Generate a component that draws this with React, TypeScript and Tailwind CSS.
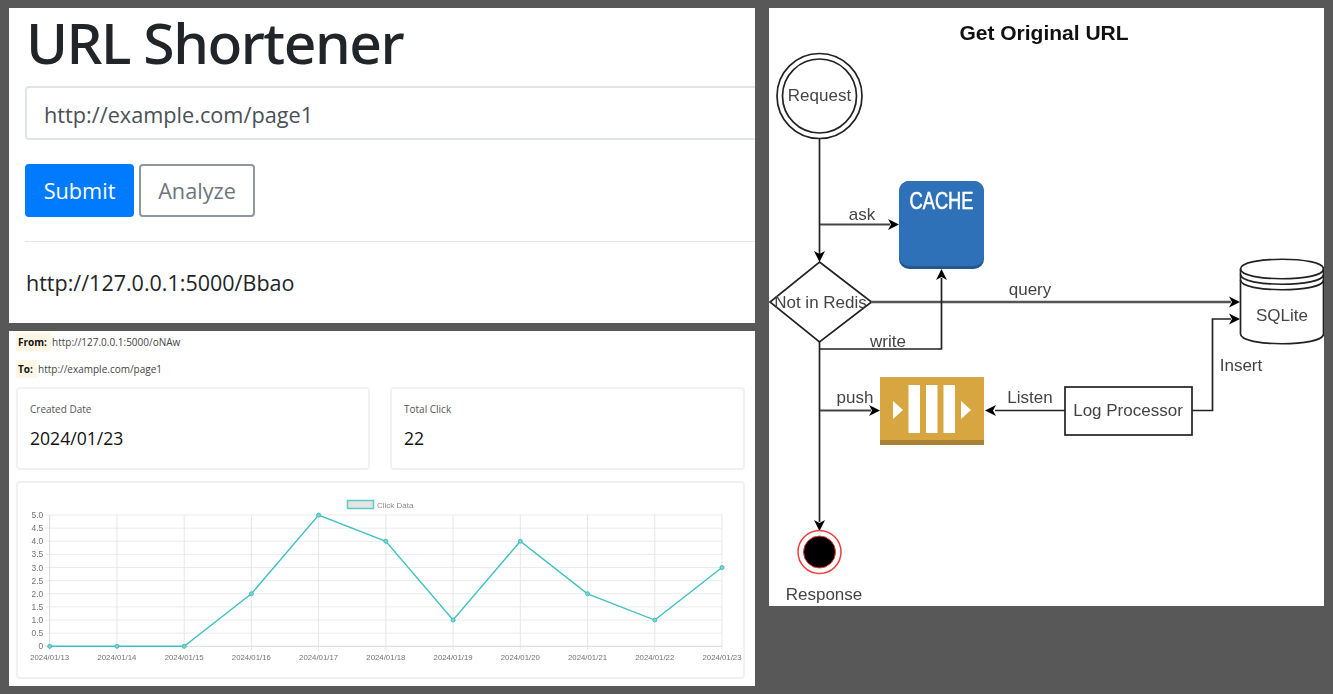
import React from 'react';

const clicks = [0, 0, 0, 2, 5, 4, 1, 4, 2, 1, 3];
const dates = ['13', '14', '15', '16', '17', '18', '19', '20', '21', '22', '23'];
const yLabels = ['0', '0.5', '1.0', '1.5', '2.0', '2.5', '3.0', '3.5', '4.0', '4.5', '5.0'];

const Chart: React.FC = () => {
  const left = 32.7;
  const stepX = 67.23;
  const bottom = 164.3;
  const stepY = 26.26;
  const px = (i: number) => left + i * stepX;
  const py = (v: number) => bottom - v * stepY;
  const points = clicks.map((v, i) => `${px(i)},${py(v)}`).join(' ');

  return (
    <svg viewBox="1 1 725 194" className="block h-[194px] w-[725px] blur-[0.3px] font-['Liberation_Sans',sans-serif]">
      <rect x="330.5" y="18.5" width="26" height="8" fill="#e4e4e4" stroke="#5fc9c9" strokeWidth="1.5" />
      <text x="360" y="25.5" fontSize="8" fill="#8a8a8a">Click Data</text>
      {yLabels.map((label, i) => (
        <g key={label}>
          <line x1={left - 4} x2={px(10)} y1={py(i / 2)} y2={py(i / 2)} stroke={i === 0 ? '#d8d8d8' : '#ebebeb'} />
          <text x={left - 6.5} y={py(i / 2) + 3} fontSize="8.4" fill="#737373" textAnchor="end">{label}</text>
        </g>
      ))}
      {dates.map((day, i) => (
        <g key={day}>
          <line x1={px(i)} x2={px(i)} y1={py(5)} y2={bottom + 4} stroke={i === 0 ? '#d8d8d8' : '#e6e6e6'} />
          <text x={px(i)} y={bottom + 14} fontSize="7.8" fill="#737373" textAnchor="middle">2024/01/{day}</text>
        </g>
      ))}
      <polyline points={points} fill="none" stroke="#3fc1c1" strokeWidth="1.4" />
      {clicks.map((v, i) => (
        <circle key={i} cx={px(i)} cy={py(v)} r="2" fill="#7cd0d0" stroke="#3fc1c1" strokeWidth="1" />
      ))}
    </svg>
  );
};

const Arrow: React.FC<{ x: number; y: number; dir: 'right' | 'left' | 'up' | 'down' }> = ({ x, y, dir }) => {
  const angle = { right: 0, down: 90, left: 180, up: 270 }[dir];
  return <path d="M0 0 L-11 -5.5 L-8 0 L-11 5.5 Z" fill="#000" transform={`translate(${x} ${y}) rotate(${angle})`} />;
};

const Diagram: React.FC = () => (
  <svg viewBox="769 8 555 598" className="block h-[598px] w-[555px] blur-[0.35px] font-['Liberation_Sans',sans-serif]">
    <text x="1044" y="40" fontSize="21" fontWeight="700" fill="#111" textAnchor="middle">Get Original URL</text>

    <g fill="none" stroke="#222" strokeWidth="1.7">
      <circle cx="819.5" cy="96" r="42.5" />
      <circle cx="819.5" cy="96" r="37" />
      <path d="M819.5 138.500 V254" />
      <path d="M820 224.500 H890" strokeWidth="2.200" stroke="#444" />
      <path d="M819.500 262 L871.500 302 L819.500 342 L770 302 Z" />
      <path d="M871 302 H1231" strokeWidth="2.500" stroke="#555" />
      <path d="M819.500 342 V522" />
      <path d="M820 349 H941.500 V278" />
      <path d="M820 410.500 H871" strokeWidth="2.200" stroke="#444" />
      <path d="M1065 410.500 H995" />
      <path d="M1192 410.500 H1212.500 V319 H1231" />
      <rect x="1065" y="387" width="127" height="48" />
      <path d="M1240.500 269 C1240.500 256 1323.500 256 1323.500 269 V334 C1323.500 347 1240.500 347 1240.500 334 Z" />
      <path d="M1240.500 269 C1240.500 282 1323.500 282 1323.500 269" />
      <path d="M1240.500 274.500 C1240.500 287.500 1323.500 287.500 1323.500 274.500" />
      <path d="M1240.500 280 C1240.500 293 1323.500 293 1323.500 280" />
    </g>

    <Arrow x={819.5} y={262} dir="down" />
    <Arrow x={899} y={224.5} dir="right" />
    <Arrow x={941.5} y={269} dir="up" />
    <Arrow x={1240} y={302} dir="right" />
    <Arrow x={1240} y={319} dir="right" />
    <Arrow x={880} y={410.5} dir="right" />
    <Arrow x={985} y={410.5} dir="left" />
    <Arrow x={819.5} y={531} dir="down" />

    {/* cache icon */}
    <rect x="899" y="181" width="85" height="88" rx="10" fill="#23598f" />
    <rect x="899" y="181" width="85" height="85" rx="10" fill="#2e71b8" />
    <text x="941.500" y="208.500" fontSize="23.500" fill="#fff" stroke="#fff" strokeWidth="0.5" textAnchor="middle" textLength="64" lengthAdjust="spacingAndGlyphs">CACHE</text>

    {/* queue icon */}
    <rect x="880" y="377" width="104" height="68" fill="#d7a641" />
    <rect x="880" y="440" width="104" height="5" fill="#a78238" />
    <rect x="908.500" y="385" width="11.500" height="48" fill="#fff" />
    <rect x="926" y="385" width="11.500" height="48" fill="#fff" />
    <rect x="943.500" y="385" width="11.500" height="48" fill="#fff" />
    <path d="M893 401 L903 410 L893 419 Z" fill="#fff" />
    <path d="M961 401 L971 410 L961 419 Z" fill="#fff" />

    <circle cx="819.5" cy="552" r="21.500" fill="#fff" stroke="#f23a3a" strokeWidth="1.500" />
    <circle cx="819.5" cy="552" r="16" fill="#000" stroke="#f23a3a" strokeWidth="1" />

    <g fontSize="17" fill="#444">
      <text x="819.500" y="101" textAnchor="middle">Request</text>
      <text x="862" y="220" textAnchor="middle">ask</text>
      <text x="820.500" y="308" textAnchor="middle">Not in Redis</text>
      <text x="1030" y="295" textAnchor="middle">query</text>
      <text x="888" y="347" textAnchor="middle">write</text>
      <text x="855" y="403" textAnchor="middle">push</text>
      <text x="1030" y="403" textAnchor="middle">Listen</text>
      <text x="1128" y="416" textAnchor="middle">Log Processor</text>
      <text x="1241" y="371" textAnchor="middle">Insert</text>
      <text x="1282" y="321" textAnchor="middle">SQLite</text>
      <text x="824" y="600" textAnchor="middle">Response</text>
    </g>
  </svg>
);

const StatCard: React.FC<{ label: string; value: string; className: string }> = ({ label, value, className }) => (
  <div className={`h-[83px] rounded border-2 border-[#f1f1f1] pl-[12px] pt-[12px] ${className}`}>
    <div className="text-[10px] leading-[16px] text-[#555]">{label}</div>
    <div className="mt-[8px] text-[17.6px] leading-[26px] text-[#111]">{value}</div>
  </div>
);

export default function App() {
  return (
    <div className="flex h-[694px] w-[1333px] items-start gap-[14px] overflow-hidden bg-[#585858] pl-[9px] pt-[8px] font-['Open_Sans',sans-serif]">
      <div className="flex w-[746px] flex-col gap-[8px]">
        <section className="h-[315px] bg-white pl-[16px]">
          <h1 className="pl-[1px] font-['Noto_Sans',sans-serif] text-[57px] font-medium leading-[68px] tracking-[-1.5px] text-[#212529]">URL Shortener</h1>
          <div className="mt-[10px] overflow-hidden">
            <input
              readOnly
              value="http://example.com/page1"
              className="block h-[54px] w-[760px] rounded border-2 border-[#e0e4e8] pl-[17px] pt-[2px] text-[21.7px] text-[#495057]"
            />
          </div>
          <div className="mt-[24px] flex gap-[5px]">
            <button className="h-[53px] w-[109px] rounded bg-[#007bff] pt-[2px] text-[21.7px] text-white">Submit</button>
            <button className="h-[53px] w-[116px] rounded border-2 border-[#8f969c] pt-[2px] text-[21.7px] text-[#6c757d]">Analyze</button>
          </div>
          <hr className="mt-[24px] border-[#e6e8ea]" />
          <p className="mt-[25px] pl-[1px] text-[21.5px] leading-[32px] text-[#212529]">http://127.0.0.1:5000/Bbao</p>
        </section>

        <section className="h-[355px] overflow-hidden bg-white pl-[7px] pr-[10px] pt-[2px]">
          <div className="flex h-[18px] items-center text-[10px] text-[#444]">
            <b className="flex h-full w-[35px] items-center bg-[#fdf6e3] pl-[2px] text-[#111]">From:</b>
            <span className="ml-[1px]">http://127.0.0.1:5000/oNAw</span>
          </div>
          <div className="mt-[9px] flex h-[18px] items-center text-[10px] text-[#444]">
            <b className="flex h-full w-[21px] items-center bg-[#fdf6e3] pl-[2px] text-[#111]">To:</b>
            <span className="ml-[1px]">http://example.com/page1</span>
          </div>
          <div className="mt-[9px] flex gap-[20px]">
            <StatCard label="Created Date" value="2024/01/23" className="w-[354px]" />
            <StatCard label="Total Click" value="22" className="w-[355px]" />
          </div>
          <div className="mt-[11px] h-[198px] w-[729px] rounded border-2 border-[#f1f1f1]">
            <Chart />
          </div>
        </section>
      </div>

      <section className="h-[598px] w-[555px] overflow-hidden bg-white">
        <Diagram />
      </section>
    </div>
  );
}
